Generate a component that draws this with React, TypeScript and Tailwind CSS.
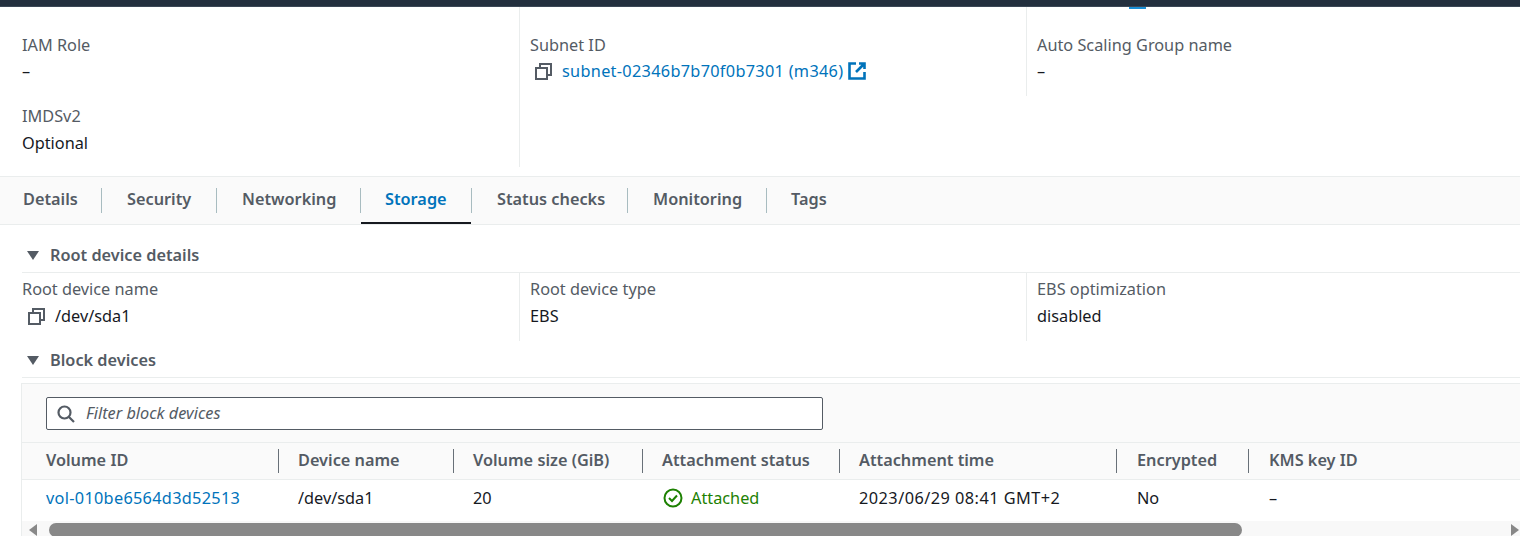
const font = { fontFamily: '"Noto Sans", sans-serif' }

function CopyIcon() {
  return (
    <svg width="17" height="17" viewBox="0 0 17 17" fill="none" stroke="#545b64" strokeWidth="2" className="shrink-0">
      <rect x="1" y="5" width="11" height="11" />
      <path d="M5 4.5V1h11v11h-3.5" />
    </svg>
  )
}

function ExternalIcon() {
  return (
    <svg width="18" height="18" viewBox="0 0 18 18" fill="none" stroke="#0073bb" strokeWidth="2.6" className="shrink-0">
      <path d="M8 1.5H1.5v15h15V10" />
      <path d="M11 1.5h5.5V7M16 2L8 10" />
    </svg>
  )
}

function SearchIcon() {
  return (
    <svg width="18" height="18" viewBox="0 0 18 18" fill="none" stroke="#545b64" strokeWidth="2.2" className="shrink-0">
      <circle cx="7.5" cy="7.5" r="6" />
      <path d="M12 12l5 5" />
    </svg>
  )
}

function Caret() {
  return (
    <svg width="12" height="9" viewBox="0 0 12 9" className="shrink-0">
      <path d="M0 0h12L6 9z" fill="#545b64" />
    </svg>
  )
}

function Label({ children }: { children: React.ReactNode }) {
  return <div className="text-[16.3px] leading-[24px] text-[#545b64]">{children}</div>
}

function Value({ children }: { children: React.ReactNode }) {
  return <div className="text-[16.3px] leading-[28px] text-[#16191f]">{children}</div>
}

const tabs = [
  { name: 'Details', cell: 'w-[102px] pl-[23px]' },
  { name: 'Security', cell: 'w-[115px] pl-[25px]' },
  { name: 'Networking', cell: 'w-[144px] pl-[25px]' },
  { name: 'Storage', cell: 'w-[111px] pl-[24px]' },
  { name: 'Status checks', cell: 'w-[156px] pl-[25px]' },
  { name: 'Monitoring', cell: 'w-[139px] pl-[25px]' },
  { name: 'Tags', cell: 'w-[100px] pl-[24px]' },
]

const columns = [
  { name: 'Volume ID', cell: 'w-[257px] pl-[24px]' },
  { name: 'Device name', cell: 'w-[175px] pl-[19px]' },
  { name: 'Volume size (GiB)', cell: 'w-[189px] pl-[19px]' },
  { name: 'Attachment status', cell: 'w-[197px] pl-[19px]' },
  { name: 'Attachment time', cell: 'w-[277px] pl-[19px]' },
  { name: 'Encrypted', cell: 'w-[132px] pl-[20px]' },
  { name: 'KMS key ID', cell: 'flex-1 pl-[20px]' },
]

export default function App() {
  return (
    <div style={font} className="relative w-[1520px] h-[536px] overflow-hidden bg-white">
      <div className="h-[7px] bg-[#232f3e] border-b border-b-[#3b4756]" />
      {/* bit of the blue nav highlight peeking out under the header */}
      <span className="absolute left-[1129px] top-[7px] w-[17px] h-[2px] bg-[#1a8fd6]" />

      {/* Instance summary */}
      <div className="flex h-[170px] border-b border-[#eaeded]">
        <div className="w-[520px] h-[160px] pl-[22px] pt-[26px] border-r border-[#eaeded]">
          <Label>IAM Role</Label>
          <Value>–</Value>
          <div className="h-[19px]" />
          <Label>IMDSv2</Label>
          <div className="mt-[1px]">
            <Value>Optional</Value>
          </div>
        </div>
        <div className="w-[507px] h-[89px] pl-[10px] pt-[26px] border-r border-[#eaeded]">
          <Label>Subnet ID</Label>
          <div className="flex items-center h-[28px] pl-[5px]">
            <CopyIcon />
            <span className="ml-[10px] text-[16.3px] tracking-[0.3px] text-[#0073bb]">subnet-02346b7b70f0b7301 (m346)</span>
            <span className="ml-[5px]"><ExternalIcon /></span>
          </div>
        </div>
        <div className="pl-[10px] pt-[26px]">
          <Label>Auto Scaling Group name</Label>
          <Value>–</Value>
        </div>
      </div>

      {/* Tabs */}
      <div className="flex h-[48px] bg-[#fafafa] border-b border-[#eaeded]">
        {tabs.map((tab, i) => (
          <div key={tab.name} className={`relative flex items-center h-[47px] pb-[2px] ${tab.cell}`}>
            <span className={`text-[16.3px] font-semibold ${tab.name === 'Storage' ? 'text-[#0073bb]' : 'text-[#545b64]'}`}>{tab.name}</span>
            {i < tabs.length - 1 && <span className="absolute right-0 top-[11px] w-px h-[25px] bg-[#a8bcc0]" />}
            {tab.name === 'Storage' && <span className="absolute left-0 right-[1px] bottom-0 h-[2px] bg-[#16191f]" />}
          </div>
        ))}
      </div>

      {/* Root device details */}
      <div className="pl-[22px]">
        <div className="flex items-center h-[48px] pt-[14px] pl-[5px] gap-[11px] border-b border-[#eaeded]">
          <Caret />
          <span className="text-[16.3px] font-semibold text-[#545b64]">Root device details</span>
        </div>
        <div className="flex h-[68px]">
          <div className="w-[498px] border-r border-[#eaeded] pt-[4px]">
            <Label>Root device name</Label>
            <div className="flex items-center h-[30px] pl-[6px] gap-[10px]">
              <CopyIcon />
              <span className="text-[16.3px] text-[#16191f]">/dev/sda1</span>
            </div>
          </div>
          <div className="w-[507px] border-r border-[#eaeded] pl-[10px] pt-[4px]">
            <Label>Root device type</Label>
            <div className="leading-[30px] text-[16.3px] text-[#16191f]">EBS</div>
          </div>
          <div className="pl-[10px] pt-[4px]">
            <Label>EBS optimization</Label>
            <div className="leading-[30px] text-[16.3px] text-[#16191f]">disabled</div>
          </div>
        </div>

        {/* Block devices */}
        <div className="flex items-center h-[37px] pt-[2px] pl-[5px] gap-[11px] border-b border-[#eaeded]">
          <Caret />
          <span className="text-[16.3px] font-semibold text-[#545b64]">Block devices</span>
        </div>
      </div>

      <div className="ml-[21px] mt-[5px] border-l border-t border-[#eaeded] bg-[#fafafa]">
        <div className="h-[59px] pl-[24px] pt-[13px] border-b border-[#eaeded]">
          <div className="flex items-center w-[777px] h-[33px] pl-[10px] gap-[11px] bg-white border border-[#545b64] rounded-[2px]">
            <SearchIcon />
            <span className="text-[16.3px] italic text-[#545b64]">Filter block devices</span>
          </div>
        </div>
        <div className="flex h-[37px] border-b border-[#eaeded]">
          {columns.map((col, i) => (
            <div key={col.name} className={`relative flex items-center pb-[2px] ${col.cell}`}>
              <span className="text-[16.3px] font-semibold text-[#545b64]">{col.name}</span>
              {i < columns.length - 1 && <span className="absolute right-0 top-[6px] w-px h-[24px] bg-[#687078]" />}
            </div>
          ))}
        </div>
        <div className="flex h-[41px] pb-[5px] bg-white text-[16.3px] text-[#16191f]">
          <div className="flex items-center w-[257px] pl-[24px] tracking-[0.3px] text-[#0073bb]">vol-010be6564d3d52513</div>
          <div className="flex items-center w-[175px] pl-[19px]">/dev/sda1</div>
          <div className="flex items-center w-[189px] pl-[19px]">20</div>
          <div className="flex items-center w-[197px] pl-[20px] gap-[8px] text-[#1d8102]">
            <svg width="20" height="20" viewBox="0 0 20 20" fill="none" stroke="#1d8102" strokeWidth="2" className="shrink-0">
              <circle cx="10" cy="10" r="8.5" />
              <path d="M6 10l3 3 5-5.5" />
            </svg>
            Attached
          </div>
          <div className="flex items-center w-[277px] pl-[19px] tracking-[0.47px]">2023/06/29 08:41 GMT+2</div>
          <div className="flex items-center w-[132px] pl-[20px]">No</div>
          <div className="flex items-center flex-1 pl-[20px]">–</div>
        </div>
        <div className="relative h-[16px] bg-[#f8f8f8]">
          <span className="absolute left-[7px] top-[3px] w-0 h-0 border-y-[6px] border-y-transparent border-r-[8px] border-r-[#888888]" />
          <span className="absolute left-[27px] top-[2px] w-[1193px] h-[14px] rounded-[7px] bg-[#888888]" />
          <span className="absolute right-[1px] top-[3px] w-0 h-0 border-y-[6px] border-y-transparent border-l-[8px] border-l-[#888888]" />
        </div>
      </div>
    </div>
  )
}
